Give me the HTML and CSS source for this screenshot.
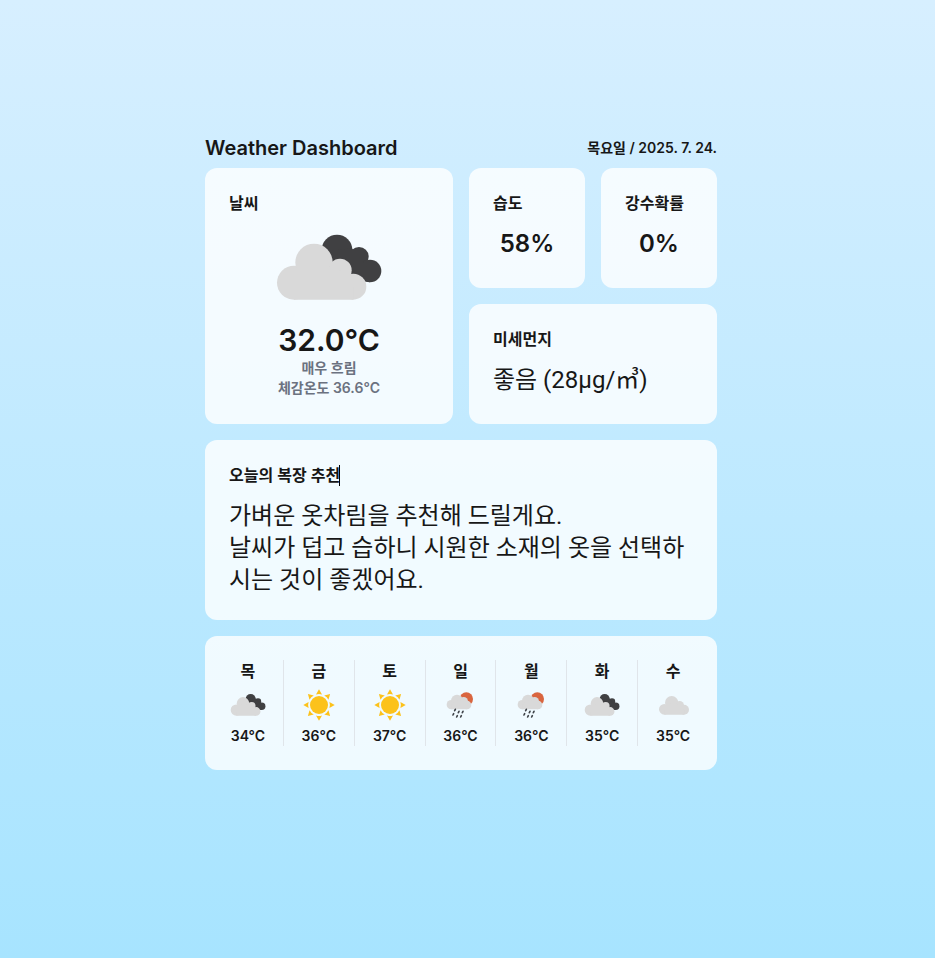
FILE: index.html
```html
<!DOCTYPE html>
<html lang="ko">
<head>
<meta charset="utf-8">
<meta name="viewport" content="width=device-width, initial-scale=1">
<title>Weather Dashboard</title>
<link rel="stylesheet" href="styles.css">
</head>
<body>
<svg class="sprite" aria-hidden="true">
  <defs>
    <g id="overcast">
      <g fill="#404042">
        <circle cx="232" cy="90" r="46"/><circle cx="298" cy="110" r="29"/><circle cx="331" cy="153" r="34"/>
        <path d="M232 90 L276 84 L298 110 L331 153 L331 187 L240 170 Z"/>
      </g>
      <g fill="#d9d9d9">
        <circle cx="103" cy="188" r="51"/><circle cx="163" cy="127" r="56"/><circle cx="241" cy="151" r="35"/><circle cx="281" cy="200" r="39"/>
        <path d="M103 188 L163 127 L241 151 L281 200 V239 H103 Z"/>
      </g>
    </g>
    <symbol id="sunny" viewBox="-18 -18 36 36">
      <g fill="#fcc21b">
        <circle r="9"/>
        <path id="ray" d="M0 -15.7 L3 -10.4 Q0 -11.4 -3 -10.4 Z"/>
        <use href="#ray" transform="rotate(45)"/><use href="#ray" transform="rotate(90)"/><use href="#ray" transform="rotate(135)"/><use href="#ray" transform="rotate(180)"/><use href="#ray" transform="rotate(225)"/><use href="#ray" transform="rotate(270)"/><use href="#ray" transform="rotate(315)"/>
      </g>
    </symbol>
    <symbol id="rain" viewBox="22 6 108 108">
      <circle cx="95" cy="42" r="20" fill="#d9653f"/>
      <g fill="#d9d9d9">
        <circle cx="50" cy="59" r="14"/><circle cx="67" cy="47" r="18"/><circle cx="87" cy="49" r="13"/><circle cx="97" cy="60" r="13"/>
        <path d="M50 59 L67 46 L87 48 L97 60 V73 H50 Z"/>
      </g>
      <path d="M62 73l-2 4M57 86l-2 4M73 79l-2 4M68 92l-2 4M85 79l-2 4M80 92l-2 4" stroke="#40444a" stroke-width="5" stroke-linecap="round"/>
    </symbol>
    <symbol id="cloudy" viewBox="285 140 108 108">
      <g fill="#d9d9d9">
        <circle cx="313" cy="207" r="16"/><circle cx="335" cy="187" r="20"/><circle cx="359" cy="195" r="13"/><circle cx="372" cy="208" r="15"/>
        <path d="M313 207 L335 186 L361 194 L373 209 V223 H313 Z"/>
      </g>
    </symbol>
  </defs>
</svg>
<main class="dashboard">
  <header class="header">
    <h1 class="header-title">Weather Dashboard</h1>
    <p class="header-date">목요일 / 2025. 7. 24.</p>
  </header>
  <div class="cards">
    <section class="card card-weather">
      <h2 class="card-title">날씨</h2>
      <div class="now">
        <svg class="now-icon" viewBox="46 -12 324 300" role="img" aria-label="매우 흐림"><use href="#overcast"/></svg>
        <p class="now-temp">32.0°C</p>
        <p class="now-note">매우 흐림</p>
        <p class="now-note">체감온도 36.6°C</p>
      </div>
    </section>
    <section class="card">
      <h2 class="card-title">습도</h2>
      <p class="card-value">58%</p>
    </section>
    <section class="card">
      <h2 class="card-title">강수확률</h2>
      <p class="card-value">0%</p>
    </section>
    <section class="card card-dust">
      <h2 class="card-title">미세먼지</h2>
      <p class="card-text">좋음 (28µg/㎥)</p>
    </section>
    <section class="card card-wide">
      <h2 class="card-title"><span class="caret">오늘의 복장 추천</span></h2>
      <p class="card-text">가벼운 옷차림을 추천해 드릴게요.<br>날씨가 덥고 습하니 시원한 소재의 옷을 선택하시는 것이 좋겠어요.</p>
    </section>
    <section class="card card-wide">
      <ul class="week">
        <li class="day"><span class="day-name">목</span><svg class="day-icon" viewBox="46 -20 324 324"><use href="#overcast"/></svg><span class="day-temp">34°C</span></li>
        <li class="day"><span class="day-name">금</span><svg class="day-icon"><use href="#sunny"/></svg><span class="day-temp">36°C</span></li>
        <li class="day"><span class="day-name">토</span><svg class="day-icon"><use href="#sunny"/></svg><span class="day-temp">37°C</span></li>
        <li class="day"><span class="day-name">일</span><svg class="day-icon"><use href="#rain"/></svg><span class="day-temp">36°C</span></li>
        <li class="day"><span class="day-name">월</span><svg class="day-icon"><use href="#rain"/></svg><span class="day-temp">36°C</span></li>
        <li class="day"><span class="day-name">화</span><svg class="day-icon" viewBox="46 -20 324 324"><use href="#overcast"/></svg><span class="day-temp">35°C</span></li>
        <li class="day"><span class="day-name">수</span><svg class="day-icon"><use href="#cloudy"/></svg><span class="day-temp">35°C</span></li>
      </ul>
    </section>
  </div>
</main>
</body>
</html>
```
FILE: styles.css
```css
* {
  box-sizing: border-box;
  margin: 0;
  padding: 0;
}

body {
  min-height: 100vh;
  padding: 134px 13px 24px 0;
  background: linear-gradient(#d7efff, #a7e4ff);
  color: #171717;
  font-family: Inter, "Noto Sans CJK KR", sans-serif;
}

.sprite {
  position: absolute;
  width: 0;
  height: 0;
}

.dashboard {
  max-width: 512px;
  margin: 0 auto;
}

.header {
  display: flex;
  align-items: center;
  justify-content: space-between;
  margin-bottom: 6px;
}

.header-title {
  font-size: 20px;
  font-weight: 600;
  line-height: 28px;
}

.header-date {
  font-size: 14px;
  font-weight: 600;
  line-height: 28px;
}

.cards {
  display: grid;
  grid-template-columns: repeat(4, 1fr);
  grid-auto-rows: minmax(120px, auto);
  gap: 16px;
}

.card {
  padding: 24px;
  border-radius: 12px;
  background: rgba(255, 255, 255, 0.8);
}

.card-weather {
  grid-column: span 2;
  grid-row: span 2;
}

.card-dust {
  grid-column: span 2;
}

.card-wide {
  grid-column: 1 / -1;
}

.card-title {
  margin-bottom: 14px;
  font-size: 16px;
  font-weight: 600;
  line-height: 22px;
  white-space: nowrap;
}

.card-weather .card-title {
  margin-bottom: 2px;
}

.card-value {
  font-size: 24px;
  font-weight: 600;
  line-height: 32px;
  text-align: center;
}

.card-text {
  font-family: Roboto, "Noto Sans CJK KR", sans-serif;
  font-size: 24px;
  line-height: 32px;
}

.caret {
  position: relative;
}

.caret::after {
  content: "";
  position: absolute;
  top: 0;
  right: 0;
  width: 1px;
  height: 21px;
  background: #000;
}

.now {
  display: flex;
  flex-direction: column;
  align-items: center;
}

.now-icon {
  width: 108px;
  height: 100px;
}

.now-temp {
  margin-top: 6px;
  font-size: 30px;
  font-weight: 600;
  line-height: 36px;
}

.now-note {
  color: #6b7280;
  font-size: 14px;
  font-weight: 600;
  line-height: 20px;
}

.week {
  display: grid;
  grid-template-columns: repeat(7, 1fr);
  margin: 0 -16px;
  list-style: none;
}

.day {
  display: flex;
  flex-direction: column;
  align-items: center;
  border-right: 1px solid #e0e5ea;
}

.day:last-child {
  border-right-color: transparent;
}

.day-name {
  font-size: 16px;
  font-weight: 600;
  line-height: 22px;
}

.day-icon {
  width: 36px;
  height: 36px;
  margin: 5px 0 3px;
}

.day-temp {
  font-size: 14px;
  font-weight: 600;
  line-height: 20px;
}
```
